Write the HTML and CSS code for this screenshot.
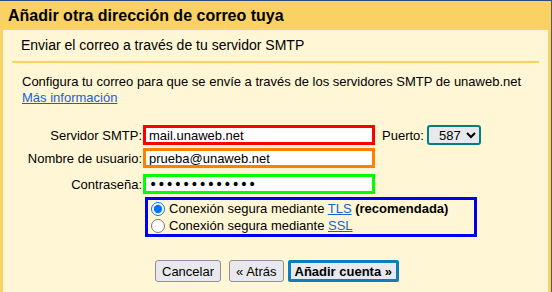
FILE: index.html
```html
<!DOCTYPE html>
<html lang="es">
<head>
  <meta charset="UTF-8">
  <title>Añadir otra dirección de correo tuya</title>
  <link rel="stylesheet" href="styles.css">
</head>
<body>
  <div class="dialog">
    <h1 class="title">Añadir otra dirección de correo tuya</h1>
    <div class="panel">
      <h2 class="section">Enviar el correo a través de tu servidor SMTP</h2>
      <p class="intro">Configura tu correo para que se envíe a través de los servidores SMTP de unaweb.net<br>
        <a href="#">Más información</a></p>
      <form class="smtp-form">
        <label for="server">Servidor SMTP:</label>
        <input type="text" id="server" class="field red" value="mail.unaweb.net">
        <div class="port">
          <label for="port">Puerto:</label>
          <select id="port" class="port-select">
            <option>587</option>
            <option>465</option>
          </select>
        </div>

        <label for="user">Nombre de usuario:</label>
        <input type="text" id="user" class="field orange" value="prueba@unaweb.net">
        <div></div>

        <label for="pass" class="pass-label">Contraseña:</label>
        <input type="password" id="pass" class="field green pass" value="1234567890123">
        <div></div>

        <div class="secure">
          <label class="radio"><input type="radio" name="secure" checked><span>Conexión segura mediante <a href="#">TLS</a> <b>(recomendada)</b></span></label>
          <label class="radio"><input type="radio" name="secure"><span>Conexión segura mediante <a href="#">SSL</a></span></label>
        </div>
      </form>
      <div class="actions">
        <button type="button" class="btn">Cancelar</button>
        <button type="button" class="btn back">« Atrás</button>
        <button type="submit" class="btn primary">Añadir cuenta »</button>
      </div>
    </div>
  </div>
</body>
</html>
```

FILE: styles.css
```css
* {
  margin: 0;
  padding: 0;
  box-sizing: border-box;
}

body {
  font-family: "Liberation Sans", Arial, sans-serif;
  font-size: 13px;
  color: #000;
  background: #fad163;
}

.dialog {
  height: 292px;
  background: #fad163;
  border-top: 1px solid #2b4a86;
  border-right: 1px solid #5a5a5a;
  display: flex;
  flex-direction: column;
}

.title {
  font-size: 16px;
  font-weight: bold;
  height: 29px;
  line-height: 29px;
  padding-left: 8px;
}

.panel {
  flex: 1;
  background: #fff6d6;
  margin: 0 3px;
}

.section {
  font-size: 14px;
  font-weight: normal;
  margin: 0 9px;
  padding: 7px 0 0 9px;
  height: 33px;
  border-bottom: 2px solid #fad163;
}

.intro {
  padding: 11px 0 0 19px;
  line-height: 16px;
}

.intro a,
.radio a {
  color: #1a5fd3;
}

.smtp-form {
  display: grid;
  grid-template-columns: 139px 232px auto;
  column-gap: 1px;
  row-gap: 3px;
  align-items: center;
  margin-top: 19px;
}

.smtp-form > label {
  text-align: right;
}

.field {
  height: 20px;
  border: 3px solid;
  padding: 0 3px;
  font-family: "Liberation Sans", Arial, sans-serif;
  font-size: 13px;
  background: #fff;
  outline: none;
}

.field.red { border-color: #f00; }
.field.orange { border-color: #ff8000; }
.field.green { border-color: #0f0; margin-top: 3px; }

.pass-label {
  margin-top: 3px;
}

.field.pass {
  font-family: "DejaVu Sans", sans-serif;
  font-size: 14px;
}

.port {
  display: flex;
  align-items: center;
  gap: 3px;
  padding-left: 6px;
}

.port-select {
  width: 54px;
  height: 20px;
  border: 2px solid #008080;
  border-radius: 3px;
  background: #e9e9ed;
  font-family: "Liberation Sans", Arial, sans-serif;
  font-size: 13px;
  padding-left: 6px;
}

.secure {
  grid-column: 2 / span 2;
  margin-left: 2px;
  width: 332px;
  border: 3px solid #0000f0;
  padding-left: 2px;
  display: flex;
  flex-direction: column;
}

.radio {
  display: flex;
  align-items: center;
  height: 17px;
}

.radio input {
  width: 14px;
  height: 14px;
  margin: 0 4px 0 1px;
}

.actions {
  display: flex;
  align-items: center;
  padding: 23px 0 0 152px;
}

.btn {
  height: 22px;
  padding: 0 6px;
  font-family: "Liberation Sans", Arial, sans-serif;
  font-size: 13px;
  background: #e9e9ed;
  border: 1px solid #8f8f9d;
  border-radius: 3px;
  color: #000;
}

.btn.back {
  margin-left: 8px;
}

.btn.primary {
  margin-left: 4px;
  font-weight: bold;
  border: 3px solid #0a7cc0;
  border-radius: 2px;
  padding: 0 4px;
}
```
